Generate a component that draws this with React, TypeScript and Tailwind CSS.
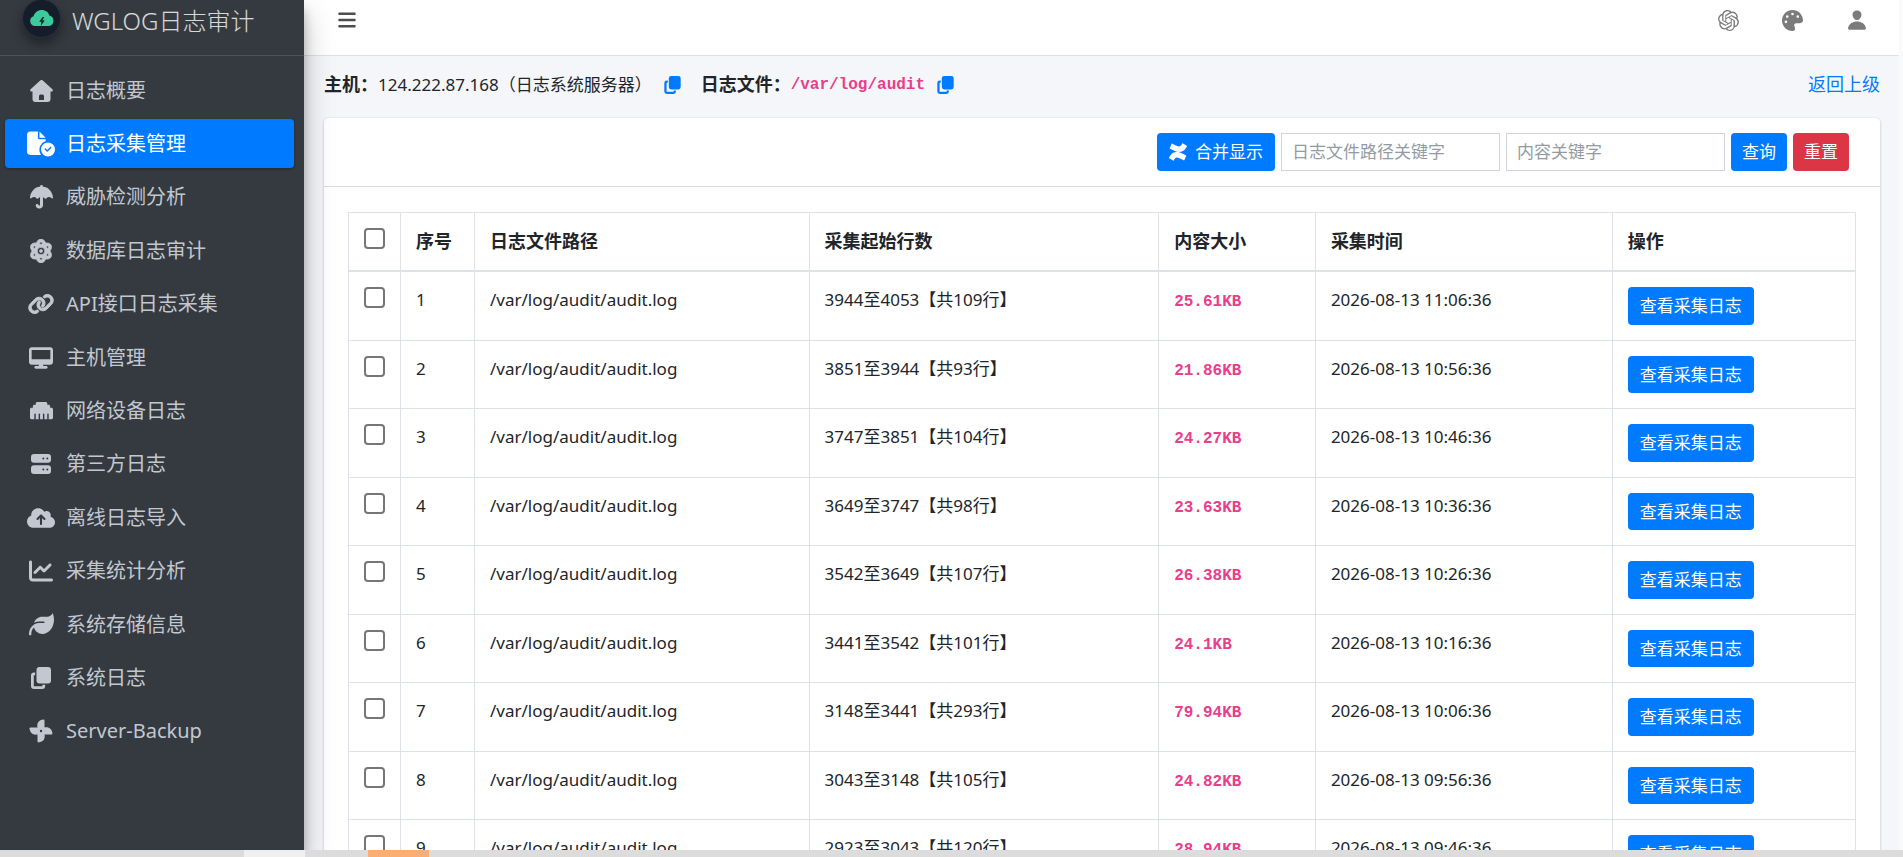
import React from 'react';
import {
  FaBars, FaAtom, FaLink, FaDesktop, FaEthernet,
  FaCloudArrowUp, FaChartLine, FaLeaf, FaPalette, FaConfluence,
} from 'react-icons/fa6';
import { IoPerson } from 'react-icons/io5';
import { SiOpenai } from 'react-icons/si';
import { clsx } from 'clsx';

interface LogRow {
  id: number;
  range: string;
  size: string;
  time: string;
}

interface IconProps {
  className?: string;
}

const HomeIcon = ({ className }: IconProps) => (
  <svg viewBox="0 0 23 22" fill="currentColor" fillRule="evenodd" className={className}>
    <path d="M10.200.5a2 2 0 0 1 2.600 0l9.600 8.700c.9.900.4 2.300-.9 2.300h-1V19a3 3 0 0 1-3 3h-12a3 3 0 0 1-3-3v-7.500h-1C.2 11.500-.3 10.100.6 9.200zM10.500 14.500a1.500 1.500 0 0 0-1.500 1.500v4h5v-4a1.500 1.500 0 0 0-1.500-1.500z" />
  </svg>
);

const FileCheckIcon = ({ className }: IconProps) => (
  <svg viewBox="0 0 576 512" fill="currentColor" className={className}>
    <path d="M0 64C0 29 29 0 64 0h160v128c0 18 14 32 32 32h128v38c-74 23-128 92-128 174 0 40 12 76 33 108H64c-35 0-64-29-64-64V64zm384 64H256V0l128 128z" />
    <path d="M432 224a144 144 0 1 0 0 288 144 144 0 0 0 0-288zm67 115-72 72c-6 6-16 6-22 0l-40-40c-6-6-6-16 0-22s16-6 22 0l29 28 61-60c6-6 16-6 22 0s6 16 0 22z" />
  </svg>
);

const UmbrellaIcon = ({ className }: IconProps) => (
  <svg viewBox="0 0 23 24" fill="currentColor" className={className}>
    <path d="M11.500 0c.8 0 1.300.5 1.300 1.300v.3C18.200 2.200 22.300 6.500 23 12.300c.1 1-.9 1.500-1.600.8-1.700-1.600-3.500-1.400-5.100.3-.5.500-1.100.5-1.500 0-2-2.200-4.600-2.200-6.600 0-.4.5-1 .5-1.500 0-1.600-1.700-3.400-1.900-5.100-.3C.900 13.800-.1 13.300 0 12.300.7 6.500 4.800 2.200 10.200 1.600v-.3C10.200.5 10.700 0 11.500 0z" />
    <path d="M11.500 12v7.700a2.200 2.200 0 0 1-4.300.8" fill="none" stroke="currentColor" strokeWidth="3" strokeLinecap="round" />
  </svg>
);

const CopyIcon = ({ className }: IconProps) => (
  <svg viewBox="0 0 20 22" fill="currentColor" className={className}>
    <path d="M8.500 0H17a3 3 0 0 1 3 3v10.500a3 3 0 0 1-3 3H8.500a3 3 0 0 1-3-3V3a3 3 0 0 1 3-3z" />
    <path d="M3 5.500h1.200v2.700h-1a.4.4 0 0 0-.4.4v10.200c0 .3.200.5.500.5h7.600c.3 0 .5-.2.500-.5v-1h2.800V19a3 3 0 0 1-3 3H3a3 3 0 0 1-3-3V8.500a3 3 0 0 1 3-3z" />
  </svg>
);

const ServerIcon = ({ className }: IconProps) => (
  <svg viewBox="0 0 20 20" fill="currentColor" fillRule="evenodd" className={className}>
    <path d="M3 0h14a3 3 0 0 1 3 3v2.800a3 3 0 0 1-3 3H3a3 3 0 0 1-3-3V3a3 3 0 0 1 3-3zm9.300 3.400a1 1 0 1 0 0 2 1 1 0 0 0 0-2zm4 0a1 1 0 1 0 0 2 1 1 0 0 0 0-2z" />
    <path d="M3 11.200h14a3 3 0 0 1 3 3V17a3 3 0 0 1-3 3H3a3 3 0 0 1-3-3v-2.800a3 3 0 0 1 3-3zm9.300 3.400a1 1 0 1 0 0 2 1 1 0 0 0 0-2zm4 0a1 1 0 1 0 0 2 1 1 0 0 0 0-2z" />
  </svg>
);

const PinwheelIcon = ({ className }: IconProps) => (
  <svg viewBox="0 0 24 24" fill="currentColor" className={className}>
    {[0, 90, 180, 270].map(angle => (
      <path
        key={angle}
        transform={`rotate(${angle} 12 12)`}
        d="M14.700.6c.5 0 .8.300.8.8V9l-3.500 3-3.300-2.300C7.200 4.500 9.500.9 14.700.6z"
      />
    ))}
    <circle cx="12" cy="12" r="4" />
    <circle cx="12" cy="12" r="1.200" fill="#343a40" />
  </svg>
);

const LogoIcon = ({ className }: IconProps) => (
  <svg viewBox="0 0 24 16" className={className}>
    <path fill="#3cc99b" d="M5 16a5 5 0 0 1-1.500-9.700C4.500 2.500 7.800 0 11.800 0c3.800 0 6.800 2.200 7.600 5.600A5.300 5.300 0 0 1 18.800 16z" />
    <path fill="#151c2a" d="M12.700 7 9.200 11.700h2.300l-.8 4.200 4.100-5.300h-2.400L14.200 7z" />
  </svg>
);

const menu = [
  { label: '日志概要', icon: HomeIcon, size: 'h-[22px] w-[23px]' },
  { label: '日志采集管理', icon: FileCheckIcon, size: 'h-[26px] w-[28px]', active: true },
  { label: '威胁检测分析', icon: UmbrellaIcon, size: 'h-[24px] w-[23px]' },
  { label: '数据库日志审计', icon: FaAtom, size: 'size-[24px] stroke-[16]' },
  { label: 'API接口日志采集', icon: FaLink, size: 'h-[22px] w-[26px] overflow-visible stroke-[24]' },
  { label: '主机管理', icon: FaDesktop, size: 'h-[22px] w-[24px]' },
  { label: '网络设备日志', icon: FaEthernet, size: 'size-[23px]' },
  { label: '第三方日志', icon: ServerIcon, size: 'size-[20px]' },
  { label: '离线日志导入', icon: FaCloudArrowUp, size: 'h-[24px] w-[28px]' },
  { label: '采集统计分析', icon: FaChartLine, size: 'size-[24px]' },
  { label: '系统存储信息', icon: FaLeaf, size: 'size-[25px]' },
  { label: '系统日志', icon: CopyIcon, size: 'h-[22px] w-[20px]' },
  { label: 'Server-Backup', icon: PinwheelIcon, size: 'size-[24px]' },
];

const rows: LogRow[] = [
  { id: 1, range: '3944至4053【共109行】', size: '25.61KB', time: '2026-08-13 11:06:36' },
  { id: 2, range: '3851至3944【共93行】', size: '21.86KB', time: '2026-08-13 10:56:36' },
  { id: 3, range: '3747至3851【共104行】', size: '24.27KB', time: '2026-08-13 10:46:36' },
  { id: 4, range: '3649至3747【共98行】', size: '23.63KB', time: '2026-08-13 10:36:36' },
  { id: 5, range: '3542至3649【共107行】', size: '26.38KB', time: '2026-08-13 10:26:36' },
  { id: 6, range: '3441至3542【共101行】', size: '24.1KB', time: '2026-08-13 10:16:36' },
  { id: 7, range: '3148至3441【共293行】', size: '79.94KB', time: '2026-08-13 10:06:36' },
  { id: 8, range: '3043至3148【共105行】', size: '24.82KB', time: '2026-08-13 09:56:36' },
  { id: 9, range: '2923至3043【共120行】', size: '28.94KB', time: '2026-08-13 09:46:36' },
];

const columns = [
  { title: '序号', width: 'w-[74px]' },
  { title: '日志文件路径', width: 'w-[22.2%]' },
  { title: '采集起始行数', width: 'w-[23.2%]' },
  { title: '内容大小', width: 'w-[10.4%]' },
  { title: '采集时间', width: 'w-[19.7%]' },
  { title: '操作', width: 'w-auto' },
];

const cell = 'border border-[#dee2e6] px-[15px] py-[15px] text-left align-top';
const code = "font-['Liberation_Mono',monospace] text-base font-bold text-[#e83e8c]";
const checkbox = 'block size-[21px] appearance-none rounded-[4px] border-2 border-[#767676] bg-white checked:bg-[#007bff]';
const button = 'rounded py-[6px] text-[17px] leading-[1.5] text-white';
const field = 'w-[219px] border border-[#ced4da] px-[10px] text-[17px] text-[#495057] placeholder:text-[#939ba2]';

const Sidebar = () => (
  <aside className="relative z-10 w-[304px] shrink-0 bg-[#343a40] text-[#c2c7d0] shadow-[0_14px_28px_rgba(0,0,0,0.25),0_10px_10px_rgba(0,0,0,0.22)]">
    <a href="#" className="flex h-14 items-center gap-[11px] border-b border-[#4b545c] pb-[19px] pl-[22px]">
      <span className="flex size-[39px] shrink-0 items-center justify-center rounded-full border border-[#2b313b] bg-[#151c2a] shadow-[0_6px_12px_rgba(0,0,0,0.4)]">
        <LogoIcon className="h-4 w-6" />
      </span>
      <span className="pt-[6px] text-2xl font-light whitespace-nowrap text-white/80">WGLOG日志审计</span>
    </a>
    <nav className="pt-[10px] pr-[10px] pl-[5px]">
      <ul className="flex h-[690px] flex-col justify-between">
        {menu.map(({ label, icon: Icon, size, active }) => (
          <li key={label}>
            <a
              href="#"
              className={clsx(
                'flex h-[49px] items-center gap-[9px] rounded pl-[20px] text-[20px]',
                active && 'bg-[#007bff] text-white shadow-[0_1px_3px_rgba(0,0,0,0.3)]'
              )}
            >
              <span className="flex w-8 shrink-0 justify-center">
                <Icon className={size} />
              </span>
              {label}
            </a>
          </li>
        ))}
      </ul>
    </nav>
  </aside>
);

const TopBar = () => (
  <header className="flex h-14 items-center justify-between border-b border-[#dee2e6] bg-white pr-[31px] pb-[15px] pl-[33px] text-[#7b7b7b]">
    <button type="button" aria-label="菜单" className="text-[#4d4d4d]">
      <FaBars className="size-5" />
    </button>
    <div className="flex items-center gap-[43px]">
      <button type="button" aria-label="AI"><SiOpenai className="size-[21px]" /></button>
      <button type="button" aria-label="主题"><FaPalette className="size-[21px]" /></button>
      <button type="button" aria-label="用户"><IoPerson className="size-[22px]" /></button>
    </div>
  </header>
);

const LogTable = () => (
  <table className="w-full table-fixed border-collapse text-[17px] leading-[1.5]">
    <thead>
      <tr>
        <th className={clsx(cell, 'w-[52px] border-b-2')}>
          <input type="checkbox" aria-label="全选" className={checkbox} />
        </th>
        {columns.map(col => (
          <th key={col.title} className={clsx(cell, col.width, 'border-b-2 text-[18px]')}>{col.title}</th>
        ))}
      </tr>
    </thead>
    <tbody>
      {rows.map(row => (
        <tr key={row.id}>
          <td className={cell}>
            <input type="checkbox" aria-label={String(row.id)} className={checkbox} />
          </td>
          <td className={cell}>{row.id}</td>
          <td className={cell}>/var/log/audit/audit.log</td>
          <td className={cell}>{row.range}</td>
          <td className={cell}><code className={code}>{row.size}</code></td>
          <td className={cell}>{row.time}</td>
          <td className={cell}>
            <button type="button" className={clsx(button, 'block bg-[#007bff] px-[12px]')}>查看采集日志</button>
          </td>
        </tr>
      ))}
    </tbody>
  </table>
);

export default function App() {
  return (
    <div className="flex h-screen flex-col overflow-hidden bg-[#f4f6f9] font-['Noto_Sans','Noto_Sans_CJK_SC',sans-serif] text-[#212529]">
      <div className="flex min-h-0 flex-1">
        <Sidebar />
        <div className="min-w-0 flex-1 overflow-hidden border-r-4 border-[#fafafa]">
          <TopBar />
          <main className="pr-[19px] pl-5">
            <div className="flex h-[62px] items-center justify-between pb-[5px] text-[17px]">
              <div className="flex items-center">
                <b className="text-[18px]">主机：</b>
                <span>124.222.87.168（日志系统服务器）</span>
                <button type="button" aria-label="复制主机" className="ml-3 text-[#007bff]"><CopyIcon className="h-[18px] w-[17px]" /></button>
                <b className="ml-5 text-[18px]">日志文件：</b>
                <code className={code}>/var/log/audit</code>
                <button type="button" aria-label="复制路径" className="ml-3 text-[#007bff]"><CopyIcon className="h-[18px] w-[17px]" /></button>
              </div>
              <a href="#" className="text-[18px] text-[#007bff]">返回上级</a>
            </div>
            <section className="rounded bg-white shadow-[0_0_1px_rgba(0,0,0,0.125),0_1px_3px_rgba(0,0,0,0.2)]">
              <div className="flex h-[69px] justify-end gap-[6px] border-b border-black/15 py-[15px] pr-[31px]">
                <button type="button" className={clsx(button, 'flex items-center gap-2 bg-[#007bff] px-[12px]')}>
                  <FaConfluence className="size-[18px]" />合并显示
                </button>
                <input type="text" aria-label="日志文件路径关键字" placeholder="日志文件路径关键字" className={field} />
                <input type="text" aria-label="内容关键字" placeholder="内容关键字" className={field} />
                <button type="button" className={clsx(button, 'bg-[#007bff] px-[11px]')}>查询</button>
                <button type="button" className={clsx(button, 'bg-[#dc3545] px-[11px]')}>重置</button>
              </div>
              <div className="px-6 py-[25px]">
                <LogTable />
              </div>
            </section>
          </main>
        </div>
      </div>
      <footer className="relative z-20 flex h-[7px] shrink-0 bg-[#dcdcdd]">
        <span className="ml-[244px] w-[61px] bg-[#f0f0f0]" />
        <span className="ml-[63px] w-[61px] bg-[#f9ae76]" />
      </footer>
    </div>
  );
}
